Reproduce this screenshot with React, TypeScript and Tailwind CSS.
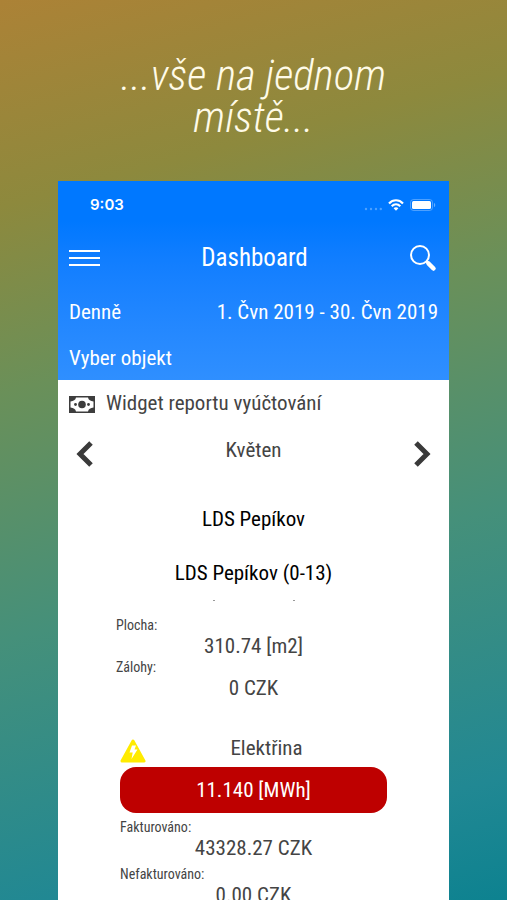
import React from "react";

function StatusIcons() {
  return (
    <div className="flex items-center gap-1.5" aria-hidden="true">
      <svg width="18" height="16" viewBox="0 0 18 16" fill="#fff" opacity="0.3">
        <circle cx="2" cy="12" r="1.2" />
        <circle cx="7" cy="12" r="1.2" />
        <circle cx="12" cy="12" r="1.2" />
        <circle cx="16.800" cy="12" r="1.2" />
      </svg>
      <svg width="16" height="12" viewBox="0 0 16 12" fill="none" stroke="#fff" strokeWidth="2.2">
        <path d="M1 4.4C5 0.2 11 0.2 15 4.4" />
        <path d="M3.7 7.2C6.2 4.8 9.8 4.8 12.3 7.2" />
        <path d="M8 11.8L5.6 9.3C6.9 8 9.1 8 10.4 9.3Z" fill="#fff" stroke="none" />
      </svg>
      <svg width="26" height="12" viewBox="0 0 26 12">
        <rect x="0.5" y="0.5" width="22" height="11" rx="3" fill="none" stroke="#fff" strokeOpacity="0.3" />
        <rect x="2" y="2" width="19" height="8" rx="1.5" fill="#fff" />
        <path d="M24 4v4c1.600 0 1.600-4 0-4z" fill="#fff" fillOpacity="0.4" />
      </svg>
    </div>
  );
}

function Header() {
  return (
    <header className="bg-linear-to-b from-[#0078ff] from-20% to-[#2f8fff] px-[11px] text-[21px] text-white">
      <div className="flex h-12 items-center justify-between pl-[21px] pr-0.5">
        <span className="font-['Inter'] text-[15px] font-semibold">9:03</span>
        <StatusIcons />
      </div>
      <div className="flex h-[58px] items-center justify-between">
        <button type="button" aria-label="Menu">
          <svg width="31" height="18" viewBox="0 0 31 18" stroke="#fff" strokeWidth="2">
            <path d="M0 2h31M0 9h31M0 16h31" />
          </svg>
        </button>
        <h1 className="text-[25px]">Dashboard</h1>
        <button type="button" aria-label="Hledat" className="pr-px">
          <svg width="28" height="28" viewBox="0 0 28 28" fill="none" stroke="#fff">
            <circle cx="11" cy="11" r="9" strokeWidth="2" />
            <path d="M17.500 17.500l2 2" strokeWidth="2.500" />
            <path d="M19.500 19.500l5 5" strokeWidth="4.500" strokeLinecap="round" />
          </svg>
        </button>
      </div>
      <div className="flex h-[52px] items-center justify-between">
        <button type="button">Denně</button>
        <button type="button">1. Čvn 2019 - 30. Čvn 2019</button>
      </div>
      <div className="flex h-[41px] items-center pb-0.5">
        <button type="button">Vyber objekt</button>
      </div>
    </header>
  );
}

function Banknote() {
  return (
    <svg width="26" height="17" viewBox="0 0 26 17" fill="#3d3d3d" aria-hidden="true">
      <path fillRule="evenodd" d="M0 0h26v17H0zM7 1.500C6.500 4 4.500 5.200 1.500 5.500v6c3 .3 5 1.500 5.500 4h12c.5-2.500 2.500-3.700 5.500-4v-6c-3-.3-5-1.500-5.500-4z" />
      <circle cx="13" cy="8.500" r="3.800" />
      <circle cx="6.500" cy="8.500" r="1.400" />
      <circle cx="19.500" cy="8.500" r="1.400" />
    </svg>
  );
}

function Chevron({ d }: { d: string }) {
  return (
    <svg width="18" height="26" viewBox="0 0 18 26" fill="none" stroke="#3a3a3a" strokeWidth="5">
      <path d={d} />
    </svg>
  );
}

function Entry({ label, value }: { label: string; value: string }) {
  return (
    <div className="leading-[21px]">
      <dt className="text-sm leading-[21px]">{label}</dt>
      <dd className="text-center">{value}</dd>
    </div>
  );
}

export default function App() {
  return (
    <main className="flex h-screen flex-col overflow-hidden bg-[linear-gradient(165deg,#ac8236_0%,#8d893d_20%,#6a9059_38%,#45907a_62%,#218893_88%,#0d8290_100%)] font-['Roboto_Condensed','Roboto',sans-serif]">
      <p className="mx-auto mt-[54px] w-[300px] shrink-0 text-center text-[43px] font-light italic leading-[42px] text-[#fffbe8]">
        ...vše na jednom místě...
      </p>
      <div className="mx-[58px] mt-[43px] shrink-0 bg-white text-[21px] text-[#444]">
        <Header />
        <h2 className="flex h-12 items-center gap-[11px] px-[11px]">
          <Banknote />
          Widget reportu vyúčtování
        </h2>
        <div className="flex h-[52px] items-center justify-between px-[17px]">
          <button type="button" aria-label="Předchozí měsíc">
            <Chevron d="M16 2L5 13l11 11" />
          </button>
          <span className="pb-1.5">Květen</span>
          <button type="button" aria-label="Další měsíc">
            <Chevron d="M2 2l11 11L2 24" />
          </button>
        </div>
        <div className="mt-3 text-center leading-[54px] text-black">
          <h3>LDS Pepíkov</h3>
          <h3>LDS Pepíkov (0-13)</h3>
        </div>
        <div className="mx-auto flex w-[82px] justify-between" aria-hidden="true">
          <i className="h-px w-0.5 bg-[#999]" />
          <i className="h-px w-0.5 bg-[#999]" />
        </div>
        <dl className="mx-[58px] mt-[14px]">
          <Entry label="Plocha:" value="310.74 [m2]" />
          <Entry label="Zálohy:" value="0 CZK" />
        </dl>
        <section className="mx-[62px] mt-9">
          <div className="flex h-8 items-center">
            <svg width="26" height="24" viewBox="0 0 26 24" aria-hidden="true">
              <path d="M13 2L24 22H2z" fill="#ffeb00" stroke="#ffeb00" strokeWidth="3" strokeLinejoin="round" />
              <path d="M12 6.500h4l-1.500 4h3L11.500 20l1.200-6.500H9.500z" fill="#fff" />
            </svg>
            <h4 className="flex-1 pb-1 text-center">Elektřina</h4>
          </div>
          <div className="h-[46px] rounded-2xl bg-[#be0000] text-center leading-[46px] text-white">11.140 [MWh]</div>
          <dl className="mt-1 space-y-[5px]">
            <Entry label="Fakturováno:" value="43328.27 CZK" />
            <Entry label="Nefakturováno:" value="0.00 CZK" />
          </dl>
        </section>
      </div>
    </main>
  );
}
